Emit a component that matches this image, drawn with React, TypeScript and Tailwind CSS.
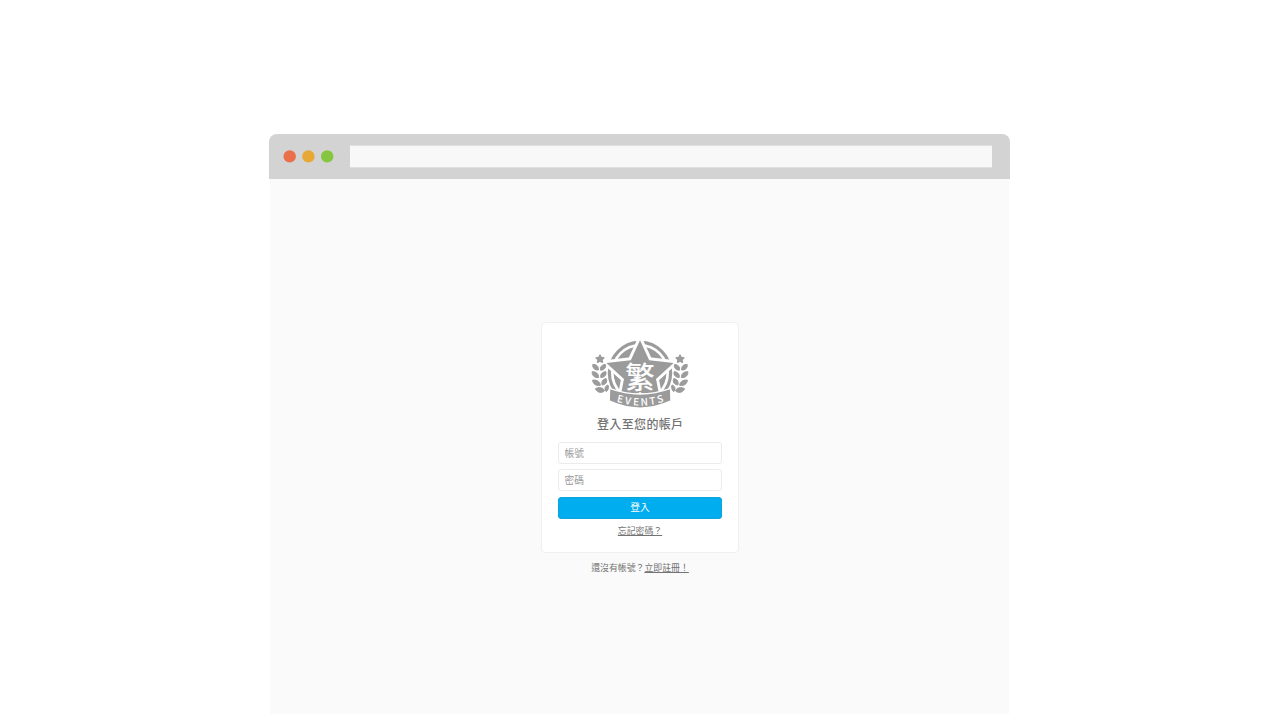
const font = "font-['Noto_Sans_CJK_TC',sans-serif]";

function Laurel() {
  return (
    <g stroke="#9b9b9b" strokeWidth="1" strokeLinejoin="round">
      <polygon points="15,20 16.3,22.3 19,22.8 17.1,24.8 17.5,27.4 15,26.2 12.5,27.4 12.9,24.8 11,22.8 13.7,22.3" strokeWidth="1.2" />
      <path d="M20.4 29.4C21.4 32.6 19.2 35 15.6 35.2C14.8 32.2 16.4 29.8 20.4 29.4Z" />
      <path d="M7.8 29.4C11.4 29.2 13.8 31.2 13.4 35C9.8 35.2 7.4 33.2 7.8 29.4Z" />
      <path d="M20.8 36.6C21.8 39.8 19.8 42.4 15.8 42.6C15 39.6 17 37 20.8 36.6Z" />
      <path d="M7.1 36.8C11 36.4 13.8 38.8 13.6 42.6C9.6 43 7.1 40.8 7.1 36.8Z" />
      <path d="M21.2 43.6C22.6 47 21 49.6 17.2 50C16 46.8 17.6 44.2 21.2 43.6Z" />
      <path d="M7.6 45.2C11.6 44.5 14.9 46.6 15.4 50.2C11.5 51.3 8 49.2 7.6 45.2Z" />
      <path d="M22.8 50C24.4 52.2 23.6 55 21.2 56.6C19 54.2 19.8 51.4 22.8 50Z" />
      <path d="M10.4 53.8C14 51.6 17.6 52.4 19.6 55.8C16.4 58.5 12.4 57.8 10.4 53.8Z" />
    </g>
  );
}

const star = "55,5.2 64.2,25.2 88.6,28 71,44 76,69 55,57 34,69 39,44 21.4,28 45.8,25.2";

function Logo() {
  return (
    <svg className="block h-20 w-[110px]" viewBox="0 0 110 80" fill="#9b9b9b">
      <circle cx="55" cy="38" r="30.6" fill="none" stroke="#9b9b9b" strokeWidth="3.2" />
      <circle cx="55" cy="38" r="26.4" />
      <polygon points={star} stroke="white" strokeWidth="5.8" />
      <polygon points={star} />
      <Laurel />
      <g transform="translate(110 0) scale(-1 1)">
        <Laurel />
      </g>
      <text x="55" y="52.5" textAnchor="middle" fontSize="29.5" fontWeight="500" fill="white" className="font-['Noto_Sans_CJK_TC',sans-serif]">繁</text>
      <path d="M24.6 53.4Q55 64.6 85.6 53.4L86 66Q55 80.2 24.2 66Z" stroke="white" strokeWidth="1.4" />
      <g fill="white" fontSize="10" fontWeight="500" textAnchor="middle" className="font-['Noto_Sans_CJK_TC',sans-serif]">
        <text transform="translate(34.5 67.5) rotate(14)">E</text>
        <text transform="translate(42.5 69.5) rotate(9)">V</text>
        <text transform="translate(51 70.5) rotate(3)">E</text>
        <text transform="translate(59.5 70.5) rotate(-3)">N</text>
        <text transform="translate(68 69.5) rotate(-9)">T</text>
        <text transform="translate(76 67.5) rotate(-14)">S</text>
      </g>
    </svg>
  );
}

export default function App() {
  return (
    <main className={`flex h-[720px] w-full justify-center overflow-hidden bg-white pt-[134px] pr-px text-[#737373] ${font}`}>
      <section className="flex h-[580px] w-[741px] flex-col">
        <header className="flex h-[45px] shrink-0 items-center rounded-t-[8px] bg-[#d3d3d3] pr-[18px] pl-[14px]">
          <svg className="h-[14px] w-[52px]" viewBox="0 0 52 14">
            <circle cx="6.7" cy="6.4" r="6.2" fill="#ea6f4b" />
            <circle cx="25.4" cy="6.4" r="6.2" fill="#e6a935" />
            <circle cx="44.2" cy="6.4" r="6.2" fill="#86c540" />
          </svg>
          <div className="ml-[15px] h-[23px] flex-1 border-y border-[#e0e0e0] bg-[#f8f8f8]" />
        </header>
        <div className="mr-px ml-[1px] flex flex-1 flex-col items-center bg-[#fafafa] pt-[143px]">
          <form className="flex h-[231px] w-[198px] flex-col items-center rounded-[4px] border border-[#f0f0f0] bg-white pt-[12px]">
            <Logo />
            <h1 className="h-[18px] pl-[1.5px] text-[12px] leading-[18px] font-medium tracking-[.35px] whitespace-nowrap">登入至您的帳戶</h1>
            <input aria-label="帳號" placeholder="帳號" className="mt-[9px] h-[22px] w-[164px] rounded-[3px] border border-[#ebebeb] px-[6px] text-[9.7px] outline-none placeholder:text-[#999]" />
            <input aria-label="密碼" type="password" placeholder="密碼" className="mt-[5px] h-[22px] w-[164px] rounded-[3px] border border-[#ebebeb] px-[6px] text-[9.7px] outline-none placeholder:text-[#999]" />
            <button type="button" className="mt-[6px] h-[22px] w-[164px] rounded-[3px] border border-[#0ba4dd] bg-[#00adee] pb-[1px] pl-[1px] text-[9.7px] leading-[19px] text-white">登入</button>
            <a href="#" className="mt-[5px] pl-[1px] text-[8.9px] leading-[13px] underline">忘記密碼？</a>
          </form>
          <p className="mt-[8px] pl-[1px] text-[8.9px] leading-[13px]">還沒有帳號？<a href="#" className="underline">立即註冊！</a></p>
        </div>
      </section>
    </main>
  );
}
